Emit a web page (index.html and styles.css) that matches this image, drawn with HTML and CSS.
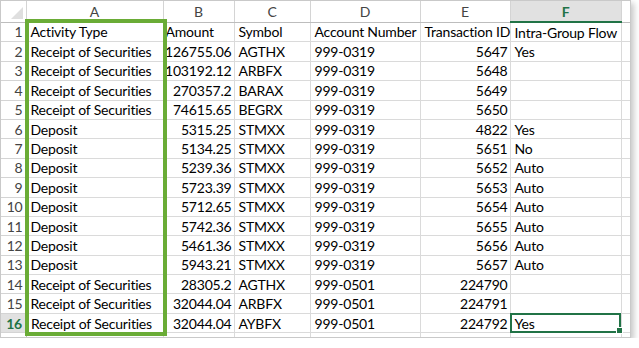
FILE: index.html
```html
<!DOCTYPE html>
<html>
<head>
<meta charset="utf-8">
<link rel="stylesheet" href="styles.css">
</head>
<body>
<div class="frame">
  <div class="sheet">
    <table class="grid">
      <colgroup>
        <col class="c-hdr"><col class="c-a"><col class="c-b"><col class="c-c"><col class="c-d"><col class="c-e"><col class="c-f"><col class="c-g">
      </colgroup>
      <thead>
        <tr class="colhdr">
          <th class="corner"><span class="tri"></span></th>
          <th>A</th><th>B</th><th>C</th><th>D</th><th>E</th><th class="sel">F</th><th></th>
        </tr>
      </thead>
      <tbody>
        <tr><th>1</th><td>Activity Type</td><td class="tight">Amount</td><td>Symbol</td><td>Account Number</td><td>Transaction ID</td><td>Intra-Group Flow</td><td></td></tr>
        <tr><th>2</th><td>Receipt of Securities</td><td class="n">126755.06</td><td>AGTHX</td><td>999-0319</td><td class="n">5647</td><td>Yes</td><td></td></tr>
        <tr><th>3</th><td>Receipt of Securities</td><td class="n">103192.12</td><td>ARBFX</td><td>999-0319</td><td class="n">5648</td><td></td><td></td></tr>
        <tr><th>4</th><td>Receipt of Securities</td><td class="n">270357.2</td><td>BARAX</td><td>999-0319</td><td class="n">5649</td><td></td><td></td></tr>
        <tr><th>5</th><td>Receipt of Securities</td><td class="n">74615.65</td><td>BEGRX</td><td>999-0319</td><td class="n">5650</td><td></td><td></td></tr>
        <tr><th>6</th><td>Deposit</td><td class="n">5315.25</td><td>STMXX</td><td>999-0319</td><td class="n">4822</td><td>Yes</td><td></td></tr>
        <tr><th>7</th><td>Deposit</td><td class="n">5134.25</td><td>STMXX</td><td>999-0319</td><td class="n">5651</td><td>No</td><td></td></tr>
        <tr><th>8</th><td>Deposit</td><td class="n">5239.36</td><td>STMXX</td><td>999-0319</td><td class="n">5652</td><td>Auto</td><td></td></tr>
        <tr><th>9</th><td>Deposit</td><td class="n">5723.39</td><td>STMXX</td><td>999-0319</td><td class="n">5653</td><td>Auto</td><td></td></tr>
        <tr><th>10</th><td>Deposit</td><td class="n">5712.65</td><td>STMXX</td><td>999-0319</td><td class="n">5654</td><td>Auto</td><td></td></tr>
        <tr><th>11</th><td>Deposit</td><td class="n">5742.36</td><td>STMXX</td><td>999-0319</td><td class="n">5655</td><td>Auto</td><td></td></tr>
        <tr><th>12</th><td>Deposit</td><td class="n">5461.36</td><td>STMXX</td><td>999-0319</td><td class="n">5656</td><td>Auto</td><td></td></tr>
        <tr><th>13</th><td>Deposit</td><td class="n">5943.21</td><td>STMXX</td><td>999-0319</td><td class="n">5657</td><td>Auto</td><td></td></tr>
        <tr><th>14</th><td>Receipt of Securities</td><td class="n">28305.2</td><td>AGTHX</td><td>999-0501</td><td class="n">224790</td><td></td><td></td></tr>
        <tr><th>15</th><td>Receipt of Securities</td><td class="n">32044.04</td><td>ARBFX</td><td>999-0501</td><td class="n">224791</td><td></td><td></td></tr>
        <tr class="selrow"><th>16</th><td>Receipt of Securities</td><td class="n">32044.04</td><td>AYBFX</td><td>999-0501</td><td class="n">224792</td><td class="active">Yes<span class="handle"></span></td><td></td></tr>
        <tr><th></th><td></td><td></td><td></td><td></td><td></td><td></td><td></td></tr>
      </tbody>
    </table>
    <div class="highlight"></div>
  </div>
</div>
</body>
</html>
```

FILE: styles.css
```css
html, body {
  margin: 0;
  padding: 0;
  background: #ffffff;
}

.frame {
  width: 629px;
  height: 336px;
  border: 1px solid #c9c9c9;
  box-shadow: 3px 3px 6px rgba(0, 0, 0, 0.22);
  background: #ffffff;
}

.sheet {
  position: relative;
  width: 100%;
  height: 100%;
  overflow: hidden;
}

.grid {
  border-collapse: collapse;
  table-layout: fixed;
  width: 680px;
  font-family: Lato, "Open Sans", sans-serif;
  font-size: 14px;
  letter-spacing: -0.2px;
  color: #000;
}

.c-hdr { width: 25px; }
.c-a { width: 137px; }
.c-b { width: 71px; }
.c-c { width: 76px; }
.c-d { width: 110px; }
.c-e { width: 90px; }
.c-f { width: 111px; }
.c-g { width: 60px; }

.grid td,
.grid th {
  border: 1px solid #dadada;
  padding: 0 2px 0 4px;
  white-space: nowrap;
  overflow: visible;
  line-height: 17px;
  height: 18.4px;
  text-align: left;
  font-weight: normal;
}

.grid td.tight {
  padding-left: 2px;
}

.grid td.n {
  text-align: right;
  padding: 0 2px 0 0;
}

.grid tbody th {
  color: #444;
  text-align: right;
  padding: 0 3px 0 0;
  border-color: #d4d4d4 #bdbdbd #d4d4d4 #d4d4d4;
}

.colhdr th {
  height: 20px;
  text-align: center !important;
  color: #444;
  padding: 0;
  border-color: #d4d4d4 #d4d4d4 #bdbdbd #d4d4d4;
  border-top: none;
}

.colhdr th.sel {
  background: #e1e1e1;
  color: #217346;
  font-weight: bold;
  border-bottom: 2px solid #217346;
}

.grid thead th:first-child,
.grid tbody th {
  border-left: none;
}

.corner {
  position: relative;
}

.tri {
  position: absolute;
  right: 3px;
  bottom: 3px;
  width: 0;
  height: 0;
  border-style: solid;
  border-width: 0 0 12px 12px;
  border-color: transparent transparent #dfdfdf transparent;
}

.selrow th {
  background: #e1e1e1;
  color: #217346 !important;
  font-weight: bold !important;
  border-right: 2px solid #217346 !important;
}

.active {
  position: relative;
  outline: 2px solid #217346;
  outline-offset: -2px;
}

.handle {
  position: absolute;
  right: -2px;
  bottom: -2px;
  width: 5px;
  height: 5px;
  background: #217346;
  border: 1px solid #fff;
}

.highlight {
  position: absolute;
  left: 24px;
  top: 18px;
  width: 134px;
  height: 309px;
  border: 4px solid #6aac36;
}
```
